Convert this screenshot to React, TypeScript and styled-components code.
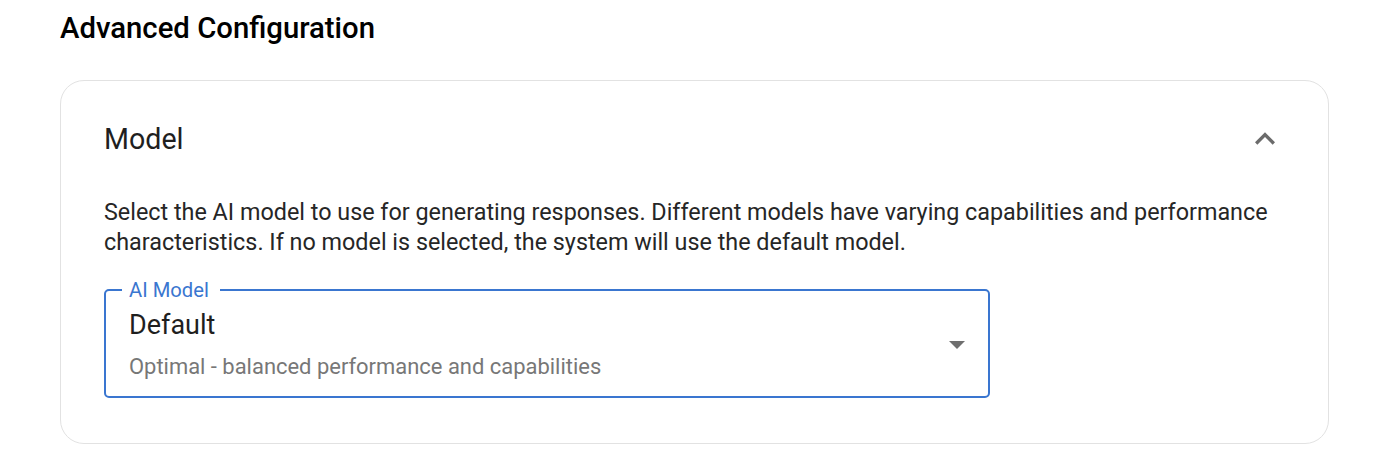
import React from "react";
import styled, { createGlobalStyle } from "styled-components";

const Global = createGlobalStyle`
  html, body { margin: 0; padding: 0; background: #ffffff; }
  body { font-family: Roboto, "Noto Sans", Arial, sans-serif; color: rgba(0,0,0,0.87); }
  * { box-sizing: border-box; }
`;

const Page = styled.div`
  padding: 10px 63px 0 60px;
`;

const Title = styled.h2`
  margin: 0;
  font-size: 29.3px;
  font-weight: 500;
  line-height: 36px;
  color: #000;
`;

const Card = styled.section`
  margin-top: 34px;
  border: 1px solid #e2e2e2;
  border-radius: 24px;
  padding: 0 43px 45px 43px;
  background: #fff;
`;

const Header = styled.div`
  height: 116px;
  display: flex;
  align-items: center;
  justify-content: space-between;
`;

const HeaderTitle = styled.div`
  font-size: 28.6px;
  font-weight: 400;
  color: #1f1f1f;
`;

const ChevronBtn = styled.button`
  border: 0;
  background: transparent;
  padding: 0;
  width: 40px;
  height: 40px;
  display: flex;
  align-items: center;
  justify-content: center;
  color: #6b6b6b;
`;

const Description = styled.p`
  margin: 0;
  font-size: 23.35px;
  line-height: 30px;
  color: #262626;
`;

const Field = styled.fieldset`
  margin: 24px 0 0 0;
  width: 886px;
  border: 2.5px solid #3a76d0;
  border-radius: 5px;
  padding: 0 50px 16px 23px;
  position: relative;
  display: flex;
  flex-direction: column;
`;

const Legend = styled.legend`
  padding: 0 11px 0 7px;
  margin-left: -7px;
  font-size: 20.2px;
  line-height: 18px;
  color: #3a76d0;
`;

const Value = styled.div`
  font-size: 27px;
  line-height: 32px;
  color: #1f1f1f;
  margin-top: 10px;
`;

const Sub = styled.div`
  margin-top: 13px;
  font-size: 21.95px;
  line-height: 26px;
  color: #777;
`;

const Arrow = styled.span`
  position: absolute;
  right: 23px;
  top: 42px;
  width: 0;
  height: 0;
  border-left: 8px solid transparent;
  border-right: 8px solid transparent;
  border-top: 8px solid #6f6f6f;
`;

export default function App() {
  return (
    <>
      <Global />
      <Page>
        <Title>Advanced Configuration</Title>
        <Card>
          <Header>
            <HeaderTitle>Model</HeaderTitle>
            <ChevronBtn aria-label="collapse">
              <svg width="40" height="40" viewBox="0 0 24 24">
                <path d="M7.41 15.41 12 10.83l4.59 4.58L18 14l-6-6-6 6z" fill="currentColor" />
              </svg>
            </ChevronBtn>
          </Header>
          <Description>
            Select the AI model to use for generating responses. Different models have varying capabilities and performance characteristics. If no model is selected, the system will use the default model.
          </Description>
          <Field>
            <Legend>AI Model</Legend>
            <Value>Default</Value>
            <Sub>Optimal - balanced performance and capabilities</Sub>
            <Arrow />
          </Field>
        </Card>
      </Page>
    </>
  );
}
